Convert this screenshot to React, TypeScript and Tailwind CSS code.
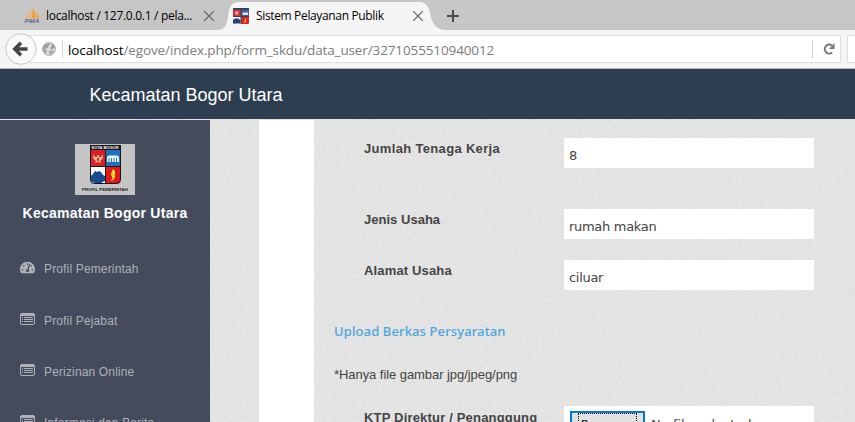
import React from "react";
import { FaTachometerAlt } from "react-icons/fa";

function CloseIcon() {
  return (
    <svg width="12" height="12" viewBox="0 0 12 12" className="shrink-0">
      <path d="M1.2 1.2 10.8 10.8M10.8 1.2 1.2 10.8" stroke="#5d5d5d" strokeWidth="1.2" />
    </svg>
  );
}

function PmaIcon() {
  return (
    <svg width="18" height="16" viewBox="0 0 18 16" className="shrink-0">
      <path d="M2 10.5 8 1 7 10.5Z" fill="#f4b56a" />
      <path d="M8 10.5 8.8 0 11 5 11.5 10.5Z" fill="#f59b35" />
      <path d="M12 10.5 12 3 16 10.5Z" fill="#f7a64b" />
      <text x="0.5" y="15" fontSize="6" fontWeight="bold" fontStyle="italic" fill="#5f6794" textLength="15" lengthAdjust="spacingAndGlyphs" className="font-['Liberation_Sans',sans-serif]">PMA</text>
    </svg>
  );
}

function TabShield() {
  return (
    <svg width="16" height="16" viewBox="0 0 16 16" className="shrink-0">
      <path d="M0 0H16V14Q16 16 14 16H2Q0 16 0 14Z" fill="#39404f" />
      <path d="M0 2H7.5V8H0Z" fill="#d8303a" />
      <path d="M8.5 2H16V8H8.5Z" fill="#3b5fa8" />
      <path d="M0 9H7.5V16H2Q0 16 0 14Z" fill="#f4f6fa" />
      <path d="M8.5 9H16V14Q16 16 14 16H8.5Z" fill="#e02028" />
      <path d="M2 3 3.5 4 5.5 3 5 6 3.8 7 2.5 6Z" fill="#e9b4a0" />
      <path d="M9.5 4.5H15V7H9.5Z" fill="#dfe8f5" />
      <path d="M0 12 2 10.5H5.5L7.5 12.5V15.5H0Z" fill="#20437f" />
      <path d="M12 10 13.5 12 12 15 11 14 12 12.5Z" fill="#ffd12a" />
    </svg>
  );
}

function Shield() {
  return (
    <svg width="31" height="39" viewBox="0 0 31 39">
      <path d="M0 0H31V34Q31 39 26 39H5Q0 39 0 34Z" fill="#171717" />
      <path d="M1 5H15V21H1Z" fill="#d9202a" />
      <path d="M16 5H30V21H16Z" fill="#2170bd" />
      <path d="M1 22H15V38H5Q1 38 1 34Z" fill="#fff" />
      <path d="M16 22H30V34Q30 38 26 38H16Z" fill="#df171f" />
      <path d="M3 9 5 12 7 12 7 10H9V12L11 12 13 9 12.5 14 10 16 11 18 8 17 5 18 6 16 3.5 14Z" fill="#e5b68d" />
      <path d="M7 13H9V16H7Z" fill="#a23a24" />
      <path d="M17 12 19 10.5H27L29 12V17H17Z" fill="#e9f5ff" />
      <path d="M19 13V17M21.5 13V17M24 13V17M26.5 13V17" stroke="#2678bb" />
      <path d="M1 31 3 29 5 26 7 27 9 26 11 27 13 30 15 31V36L12 37V38H5L1 36Z" fill="#174a91" />
      <path d="M23 24C27 27 24 29 25 31 25 34 22 37 21 35 24 33 21 31 21 29 24 28 23 26Z" fill="#ffdf24" />
    </svg>
  );
}

function GlobeIcon() {
  return (
    <svg width="14" height="14" viewBox="0 0 14 14" className="shrink-0">
      <circle cx="7" cy="7" r="6.5" fill="#dedede" stroke="#b2b2b2" />
      <path d="M1 5 3 2 7 1 8 3 6 4 6 6 3 7 5 9 4 12 1 9Z" fill="#a1a1a1" />
      <path d="M9 1 12 3 13 7 11 6 10 8 8 6 10 4Z" fill="#999" />
      <path d="M7 9 11 8 12 10 9 13 7 12Z" fill="#a9a9a9" />
    </svg>
  );
}

function ListIcon() {
  return (
    <svg width="15" height="12" viewBox="0 0 15 12" className="shrink-0" shapeRendering="crispEdges">
      <path d="M1 0H14V1H15V11H14V12H1V11H0V1H1ZM1 3V11H14V3Z" fill="#aeb2b8" fillRule="evenodd" />
      <path d="M2 4H3V5H2ZM4 4H13V5H4ZM2 6H3V7H2ZM4 6H13V7H4ZM2 8H3V9H2ZM4 8H13V9H4Z" fill="#aeb2b8" />
    </svg>
  );
}

function Texture() {
  return (
    <svg className="pointer-events-none absolute inset-0 h-full w-full" aria-hidden="true">
      <filter id="paper" x="0" y="0" width="100%" height="100%" colorInterpolationFilters="sRGB">
        <feTurbulence type="fractalNoise" baseFrequency="0.3" numOctaves="2" seed="6" stitchTiles="stitch" />
        <feColorMatrix type="matrix" values="0.04 0 0 0 0.871  0.04 0 0 0 0.871  0.04 0 0 0 0.871  0 0 0 0 1" />
      </filter>
      <rect width="100%" height="100%" filter="url(#paper)" />
    </svg>
  );
}

function MenuItem({ label, dashboard = false }: { label: string; dashboard?: boolean }) {
  return (
    <li className={`flex items-start pl-5 text-[12px] leading-4 text-[#afb2b6] ${dashboard ? "h-[52px]" : "h-[51px]"}`}>
      <span className="flex h-[14px] w-6 shrink-0 items-center">
        {dashboard ? <FaTachometerAlt size={15} /> : <ListIcon />}
      </span>
      <span className="whitespace-nowrap pt-px tracking-[0.15px]">{label}</span>
    </li>
  );
}

function Field({ label, value, className, labelClass }: { label: string; value: string; className: string; labelClass: string }) {
  return (
    <div className={`flex pl-[30px] ${className}`}>
      <div className={`w-[200px] shrink-0 pt-[3px] text-[13px] font-bold leading-4 ${labelClass}`}>{label}</div>
      <div className="h-[30px] w-[250px] bg-white pl-[5px] pt-[10px] font-['DejaVu_Sans',sans-serif] text-[13px] leading-4 tracking-[-0.3px]">{value}</div>
    </div>
  );
}

export default function App() {
  return (
    <div className="h-[422px] w-[855px] overflow-hidden bg-[#e4e4e4] font-['Liberation_Sans',sans-serif] text-[#444]">
      <div className="relative flex h-[30px] bg-[#c6c6c6] font-['Open_Sans',sans-serif] text-[12px] text-black">
        <svg className="absolute left-[218px] top-0" width="228" height="30" viewBox="0 0 228 30">
          <path d="M0 30C7 30 9 24 10 17C11 8 13 2 21 2H201C210 2 211 9 213 17C215 25 219 30 228 30Z" fill="#f5f5f5" />
        </svg>
        <div className="relative flex w-[233px] items-center pl-6 pt-0.5">
          <PmaIcon />
          <span className="ml-1 w-[157px] whitespace-nowrap tracking-[-0.3px]">localhost / 127.0.0.1 / pela...</span>
          <CloseIcon />
        </div>
        <div className="relative flex items-center pt-0.5">
          <TabShield />
          <span className="ml-[7px] w-[156px] whitespace-nowrap tracking-[-0.35px]">Sistem Pelayanan Publik</span>
          <CloseIcon />
          <svg className="ml-[23px]" width="12" height="12" viewBox="0 0 12 12">
            <path d="M6 0V12M0 6H12" stroke="#4d4d4d" strokeWidth="2" />
          </svg>
        </div>
      </div>

      <div className="relative flex h-[39px] border-b border-[#b9b9b9] bg-[#f5f5f5] pt-[5px]">
        <div className="ml-[22px] flex h-7 w-[825px] items-center border border-[#dedede] bg-white pl-[19px]">
          <GlobeIcon />
          <div className="ml-1.5 h-[18px] w-px bg-[#cfcfcf]" />
          <div className="ml-[5px] w-[744px] whitespace-nowrap pt-0.5 font-['Open_Sans',sans-serif] text-[13.5px] leading-5 tracking-[-0.12px] text-[#7c7c7c]">
            <span className="text-black">localhost</span>/egove/index.php/form_skdu/data_user/3271055510940012
          </div>
          <div className="h-[18px] w-px bg-[#cfcfcf]" />
          <svg className="ml-[10px]" width="12" height="12" viewBox="0 0 12 12">
            <path d="M9 2.5A4.5 4.5 0 1 0 9.2 9.5" fill="none" stroke="#777" strokeWidth="2" />
            <path d="M11.5 0V6H6Z" fill="#777" />
          </svg>
        </div>
        <div className="ml-1.5 h-7 w-2 border border-r-0 border-[#dedede] bg-white" />
        <svg className="absolute left-[5px] top-[3px]" width="32" height="32" viewBox="0 0 32 32">
          <circle cx="16" cy="16" r="15.3" fill="#f9f9f9" stroke="#c9c9c9" />
          <path d="M22.5 16H10M16 9.7 9.7 16 16 22.3" fill="none" stroke="#444" strokeWidth="3.4" />
        </svg>
      </div>

      <header className="h-[50px] bg-[#2d3e50] pl-[89.5px] pt-[14px] text-[18px] leading-6 text-white">Kecamatan Bogor Utara</header>

      <div className="relative h-[303px]">
        <Texture />
        <div className="relative flex h-[303px] pt-px">
          <aside className="h-[302px] w-[210px] shrink-0 overflow-hidden bg-[#434b5d]">
            <div className="mx-auto mt-6 flex h-[51px] w-[60px] flex-col items-center bg-[#c4c4c4]">
              <div className="relative mt-px h-[39px] w-[31px]">
                <Shield />
                <div className="absolute inset-x-0 top-0 text-center text-[4px] font-bold leading-[5px] text-white">
                  <span className="whitespace-nowrap">KOTA BOGOR</span>
                </div>
              </div>
              <div className="whitespace-nowrap pt-[3px] text-[4.4px] font-bold leading-[6px] text-[#222]">PROFIL PEMERINTAH</div>
            </div>
            <h2 className="mt-2.5 whitespace-nowrap text-center text-[14px] font-bold leading-4 tracking-[0.26px] text-white">Kecamatan Bogor Utara</h2>
            <ul className="mt-[39px]">
              <MenuItem label="Profil Pemerintah" dashboard />
              <MenuItem label="Profil Pejabat" />
              <MenuItem label="Perizinan Online" />
              <MenuItem label="Informasi dan Berita" />
            </ul>
          </aside>
          <div className="ml-[49px] h-[302px] w-[55px] shrink-0 bg-white" />
          <main className="h-[302px] w-[541px] overflow-hidden pl-5 pt-[18px]">
            <Field label="Jumlah Tenaga Kerja" value="8" className="" labelClass="tracking-[0.33px]" />
            <Field label="Jenis Usaha" value="rumah makan" className="mt-[41px]" labelClass="tracking-[0.02px]" />
            <Field label="Alamat Usaha" value="ciluar" className="mt-[21px]" labelClass="tracking-[0.15px]" />
            <h3 className="mt-[31px] font-['Noto_Sans',sans-serif] text-[13px] font-medium leading-5 tracking-[0.12px] text-[#4aa6df]">Upload Berkas Persyaratan</h3>
            <p className="mt-[26px] text-[13px] leading-4 tracking-[-0.06px]">*Hanya file gambar jpg/jpeg/png</p>
            <div className="mt-[23px] flex pl-[30px]">
              <div className="w-[200px] shrink-0 pt-1 text-[13px] font-bold leading-4 tracking-[0.18px]">KTP Direktur / Penanggung</div>
              <div className="flex h-[34px] w-[250px] bg-white pl-1.5 pt-[5px] font-['DejaVu_Sans',sans-serif] text-[13px]">
                <div className="h-[27px] w-[75px] border-2 border-[#0078d7] bg-[#e1e1e1] px-1.5">
                  <div className="h-5 border border-dotted border-black pl-0.5 pt-px text-[11px] leading-5 text-black">Browse...</div>
                </div>
                <span className="ml-1.5 whitespace-nowrap pt-[4px] leading-5">No file selected.</span>
              </div>
            </div>
          </main>
        </div>
      </div>
    </div>
  );
}
